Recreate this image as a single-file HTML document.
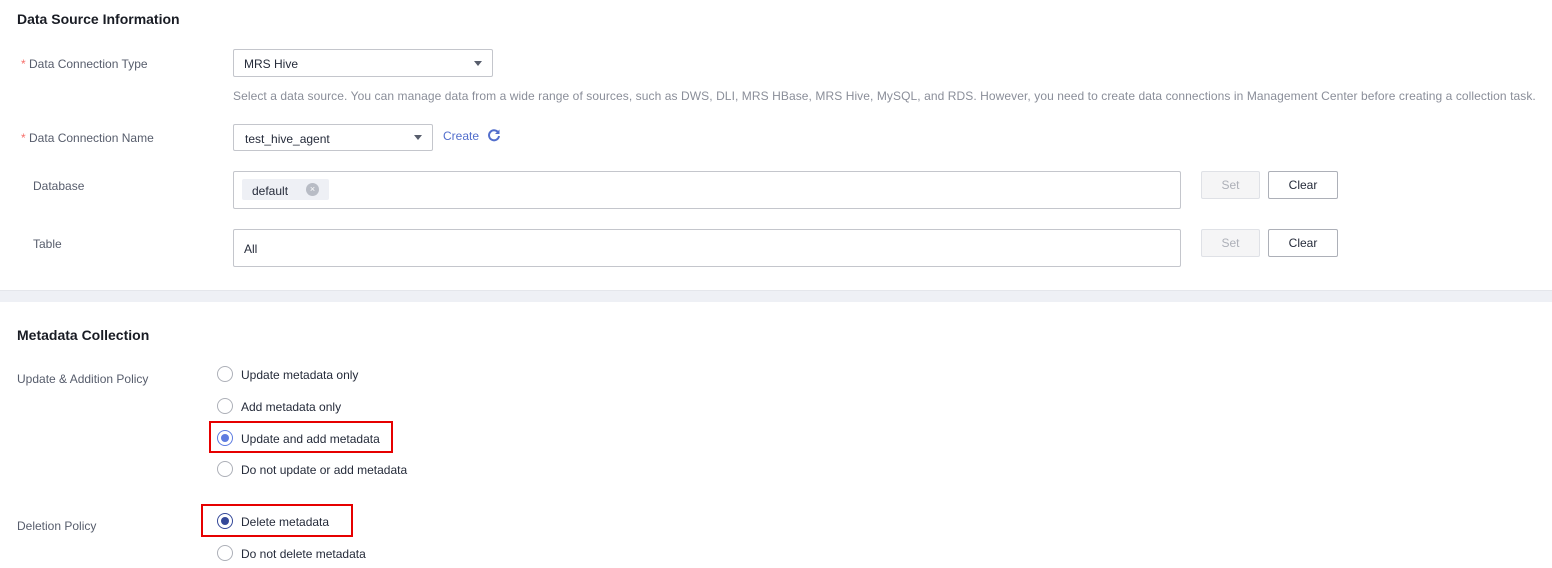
<!DOCTYPE html>
<html><head><meta charset="utf-8"><style>
*{box-sizing:border-box;margin:0;padding:0}
body{width:1552px;height:568px;background:#fff;font-family:"Liberation Sans",sans-serif;font-size:12px;color:#252b3a;position:relative;overflow:hidden}
.a{position:absolute;white-space:nowrap;line-height:14px}
.t{font-weight:bold;font-size:14px;color:#191c24}
.lbl{color:#575d6c}
.star{color:#f66f6a}
.box{position:absolute;border:1px solid #c4c6cc;border-radius:2px;background:#fff}
.caret{position:absolute;width:0;height:0;border-left:4px solid transparent;border-right:4px solid transparent;border-top:5px solid #575d6c}
.btn{position:absolute;border:1px solid #adb0b8;border-radius:2px;text-align:center;line-height:26px}
.set{background:#f5f5f6;border-color:#dfe1e6;color:#adb0b8}
.r{position:absolute;width:16px;height:16px;border:1px solid #adb0b8;border-radius:50%;background:#fff}
.r.on{border-color:#5e7ce0}
.r.on::after{content:"";position:absolute;left:3px;top:3px;width:8px;height:8px;border-radius:50%;background:#5e7ce0}
.r.dk{border-color:#344899}
.r.dk::after{background:#344899}
.red{position:absolute;border:2px solid #e60000}
</style></head><body>
<div class="a t" style="left:17px;top:12px">Data Source Information</div>

<div class="a" style="left:21px;top:57px"><span class="star">*</span> <span class="lbl">Data Connection Type</span></div>
<div class="box" style="left:233px;top:49px;width:260px;height:28px"></div>
<div class="a" style="left:244px;top:57px">MRS Hive</div>
<div class="caret" style="left:474px;top:61px"></div>
<div class="a" style="left:233px;top:89px;color:#8a8e99;letter-spacing:0.08px">Select a data source. You can manage data from a wide range of sources, such as DWS, DLI, MRS HBase, MRS Hive, MySQL, and RDS. However, you need to create data connections in Management Center before creating a collection task.</div>

<div class="a" style="left:21px;top:131px"><span class="star">*</span> <span class="lbl">Data Connection Name</span></div>
<div class="box" style="left:233px;top:124px;width:200px;height:27px"></div>
<div class="a" style="left:245px;top:132px">test_hive_agent</div>
<div class="caret" style="left:414px;top:135px"></div>
<div class="a" style="left:443px;top:129px;color:#526ecc">Create</div>
<svg style="position:absolute;left:487px;top:128px" width="14" height="14" viewBox="0 0 14 14"><path d="M11.5 5A5 5 0 1 0 12 8" fill="none" stroke="#526ecc" stroke-width="2"/><path d="M12.5 1.5V6H8z" fill="#526ecc"/></svg>

<div class="a lbl" style="left:33px;top:179px">Database</div>
<div class="box" style="left:233px;top:171px;width:948px;height:38px"></div>
<div class="a" style="left:242px;top:179px;width:87px;height:21px;background:#eef0f5;border-radius:2px"></div>
<div class="a" style="left:252px;top:184px">default</div>
<div class="a" style="left:306px;top:183px;width:13px;height:13px;border-radius:50%;background:#b8bcc5;color:#fff;font-size:9px;line-height:13px;text-align:center">×</div>
<div class="btn set" style="left:1201px;top:171px;width:59px;height:28px">Set</div>
<div class="btn" style="left:1268px;top:171px;width:70px;height:28px">Clear</div>

<div class="a lbl" style="left:33px;top:237px">Table</div>
<div class="box" style="left:233px;top:229px;width:948px;height:38px"></div>
<div class="a" style="left:244px;top:242px">All</div>
<div class="btn set" style="left:1201px;top:229px;width:59px;height:28px">Set</div>
<div class="btn" style="left:1268px;top:229px;width:70px;height:28px">Clear</div>

<div style="position:absolute;left:0;top:290px;width:1552px;height:12px;background:#eef0f5;border-top:1px solid #e4e6eb"></div>

<div class="a t" style="left:17px;top:328px">Metadata Collection</div>
<div class="a lbl" style="left:17px;top:372px">Update &amp; Addition Policy</div>
<div class="r" style="left:217px;top:366px"></div><div class="a" style="left:241px;top:368px">Update metadata only</div>
<div class="r" style="left:217px;top:398px"></div><div class="a" style="left:241px;top:400px">Add metadata only</div>
<div class="r on" style="left:217px;top:430px"></div><div class="a" style="left:241px;top:432px">Update and add metadata</div>
<div class="red" style="left:209px;top:421px;width:184px;height:32px"></div>
<div class="r" style="left:217px;top:461px"></div><div class="a" style="left:241px;top:463px">Do not update or add metadata</div>

<div class="a lbl" style="left:17px;top:519px">Deletion Policy</div>
<div class="r on dk" style="left:217px;top:513px"></div><div class="a" style="left:241px;top:515px">Delete metadata</div>
<div class="red" style="left:201px;top:504px;width:152px;height:33px"></div>
<div class="r" style="left:217px;top:545px"></div><div class="a" style="left:241px;top:547px">Do not delete metadata</div>
</body></html>
